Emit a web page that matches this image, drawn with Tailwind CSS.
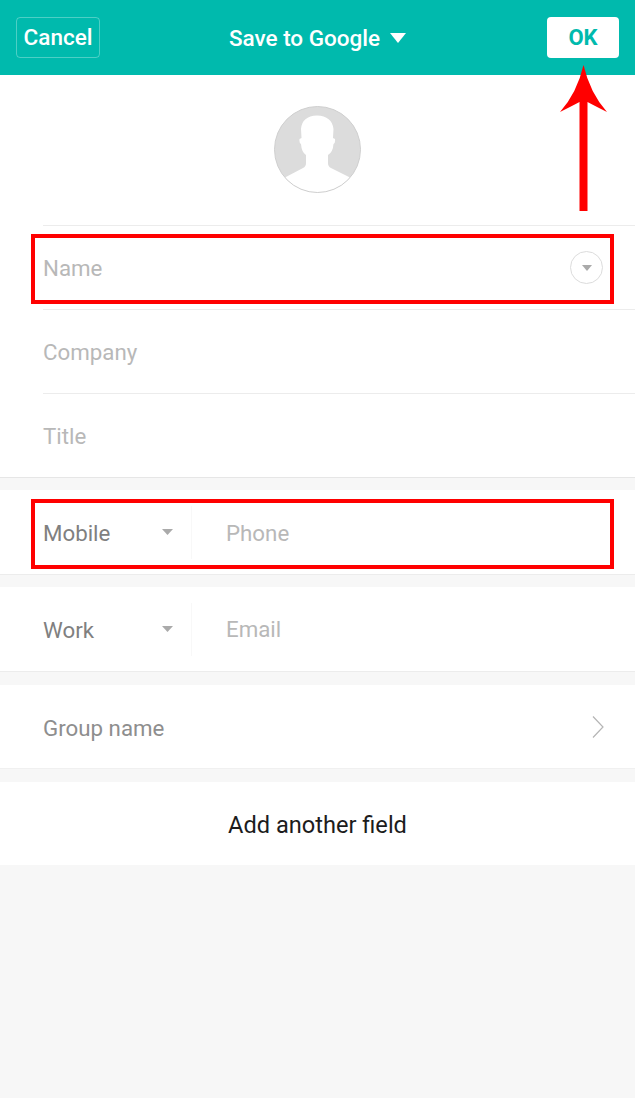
<!DOCTYPE html>
<html lang="en">
<head>
    <meta charset="UTF-8">
    <title>Save to Google</title>
    <script src="https://cdn.jsdelivr.net/npm/@tailwindcss/browser@4"></script>
</head>
<body class="relative w-[635px] h-[1098px] overflow-hidden bg-[#f7f7f7] font-['Roboto',sans-serif]">

<!-- top bar -->
<header class="h-[75px] bg-[#00baad] grid grid-cols-[1fr_auto_1fr] items-center px-4">
    <button class="justify-self-start w-[84px] h-[41px] border border-white/30 rounded pt-[1px] text-white text-[22.5px] font-medium">Cancel</button>
    <div class="flex items-center gap-[10px] text-white text-[22.5px] font-medium">
        <span class="pt-[2px]">Save to Google</span>
        <svg width="16" height="10" viewBox="0 0 16 10"><path d="M0 0h16L8 10z" fill="#fff"/></svg>
    </div>
    <button class="justify-self-end w-[72px] h-[41px] bg-white rounded text-[#00baad] text-[22px] font-bold">OK</button>
</header>

<!-- avatar -->
<section class="bg-white">
    <div class="h-[150px] flex justify-center pt-[31px]">
        <svg width="87" height="87" viewBox="0 0 87 87">
            <defs><clipPath id="avatarClip"><circle cx="43.5" cy="43.5" r="43"/></clipPath></defs>
            <circle cx="43.5" cy="43.5" r="43" fill="#dcdcdc"/>
            <path clip-path="url(#avatarClip)" d="M10 72 L29 62 Q32 60.500 32 57 L32 49 Q27.500 46 27 38 Q25 37 25.500 33 L27.500 32 L27 23 Q28 10 43 9.500 Q58 10 59.500 23 L59 32 L61 33 Q61.500 37 59.500 38 Q59 46 54 49 L54 57 Q54 60.500 57 62 L77 72 L77 90 L10 90 Z" fill="#fff"/>
            <circle cx="43.500" cy="43.500" r="43" fill="none" stroke="#cfcfcf" stroke-width="1"/>
        </svg>
    </div>
    <div class="pl-[43px] text-[22.3px] text-[#b8b8b8]">
        <div class="h-[84px] border-t border-[#ececec] flex items-center justify-between pr-8">
            <span class="pt-[3px]">Name</span>
            <span class="w-[33px] h-[33px] rounded-full border border-[#dcdcdc] flex items-center justify-center">
                <svg width="10" height="6" viewBox="0 0 10 6"><path d="M0 0h10L5 6z" fill="#aaa"/></svg>
            </span>
        </div>
        <div class="h-[84px] border-t border-[#ececec] flex items-center pt-[3px]">Company</div>
        <div class="h-[84px] border-t border-[#ececec] flex items-center pt-[3px]">Title</div>
    </div>
</section>
<div class="h-[13px] border-t border-[#e6e6e6]"></div>

<!-- phone -->
<section class="h-[85px] bg-white border-b border-[#ececec] flex items-center pl-[43px] text-[22.3px]">
    <div class="w-[149px] h-[53px] border-r border-[#f8f8f8] flex items-center justify-between pr-[18px] text-[#808080]">
        <span class="pt-[3px]">Mobile</span>
        <svg width="11" height="6" viewBox="0 0 11 6"><path d="M0 0h11L5.500 6z" fill="#aaa"/></svg>
    </div>
    <span class="pl-[34px] pt-[3px] text-[#b8b8b8]">Phone</span>
</section>
<div class="h-[12px]"></div>

<!-- email -->
<section class="h-[85px] bg-white border-b border-[#ececec] flex items-center pl-[43px] text-[22.3px]">
    <div class="w-[149px] h-[53px] border-r border-[#f8f8f8] flex items-center justify-between pr-[18px] text-[#808080]">
        <span class="pt-[3px]">Work</span>
        <svg width="11" height="6" viewBox="0 0 11 6"><path d="M0 0h11L5.500 6z" fill="#aaa"/></svg>
    </div>
    <span class="pl-[34px] pt-[2px] text-[#b8b8b8]">Email</span>
</section>
<div class="h-[13px]"></div>

<!-- group -->
<section class="h-[84px] bg-white border-b border-[#f0f0f0] flex items-center justify-between pl-[43px] pr-[31px] text-[22.3px] text-[#8e8e8e]">
    <span class="pt-[5px]">Group name</span>
    <svg width="12" height="22" viewBox="0 0 12 22"><path d="M1 .5 11 11 1 21.500" fill="none" stroke="#b5b5b5" stroke-width="1.200"/></svg>
</section>
<div class="h-[13px]"></div>

<section class="h-[83px] bg-white flex items-center justify-center pt-[5px] text-[23.6px] text-[#1c1c1c]">Add another field</section>

<!-- red annotations on top of the screenshot -->
<div class="absolute left-[31px] top-[234px] w-[583px] h-[70px] border-4 border-[#ff0000]"></div>
<div class="absolute left-[31px] top-[499px] w-[583px] h-[70px] border-4 border-[#ff0000]"></div>
<svg class="absolute left-[560px] top-[65px]" width="47" height="146" viewBox="0 0 47 146">
    <path d="M23.500 0 Q30 28 47 47 Q35 41 27.500 37 L27.500 146 L19.500 146 L19.500 37 Q12 41 0 47 Q17 28 23.500 0 Z" fill="#ff0000"/>
</svg>
</body>
</html>
